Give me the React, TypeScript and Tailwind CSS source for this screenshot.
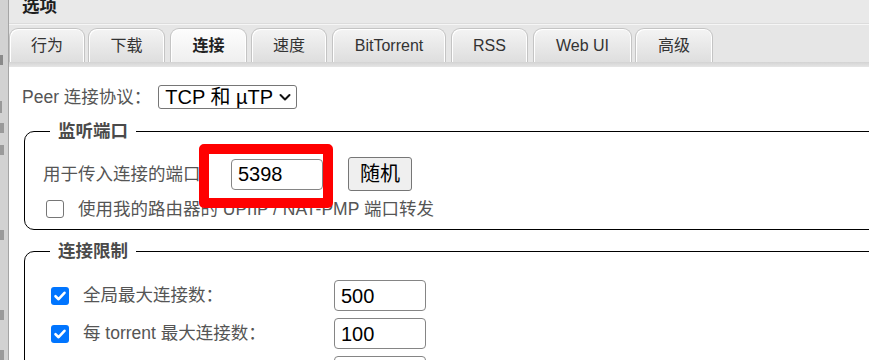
import React from "react";

const FONT = '"Liberation Sans", "Noto Sans CJK SC", sans-serif';

const tabs = [
  { label: "行为", cls: "w-[76px] ml-0", active: false },
  { label: "下载", cls: "w-[77px] ml-[3px]", active: false },
  { label: "连接", cls: "w-[77px] ml-[5px]", active: true },
  { label: "速度", cls: "w-[76px] ml-[4px]", active: false },
  { label: "BitTorrent", cls: "w-[114px] ml-[5px]", active: false },
  { label: "RSS", cls: "w-[77px] ml-[5px]", active: false },
  { label: "Web UI", cls: "w-[99px] ml-[5px]", active: false },
  { label: "高级", cls: "w-[78px] ml-[3px]", active: false },
];

function CheckBox({ checked }: { checked: boolean }) {
  if (checked) {
    return (
      <span className="w-[18px] h-[18px] rounded-[3px] bg-[#0075ff] flex items-center justify-center shrink-0">
        <svg width="14" height="14" viewBox="0 0 14 14">
          <path d="M2.5 7.2 L5.6 10.2 L11.5 3.8" fill="none" stroke="#ffffff" strokeWidth="2.6" strokeLinecap="round" strokeLinejoin="round" />
        </svg>
      </span>
    );
  }
  return <span className="w-[18px] h-[18px] rounded-[3px] border border-[#767676] bg-white shrink-0" />;
}

function NumInput({ value }: { value: string }) {
  return (
    <div className="w-[92px] h-[31px] border border-[#858585] rounded-[4px] bg-white flex items-center pl-[6px] text-[20px] text-black leading-none">
      {value}
    </div>
  );
}

export default function App() {
  return (
    <div className="relative w-[869px] h-[360px] overflow-hidden flex bg-white" style={{ fontFamily: FONT }}>
      {/* background window strip */}
      <div className="w-[9px] shrink-0 bg-[#d2d2d2] border-r border-[#a5a5a5] flex flex-col">
        <div className="h-[55px] shrink-0" />
        <div className="w-[3px] h-[10px] bg-[#8a8a8a] shrink-0" />
        <div className="h-[36px] shrink-0" />
        <div className="w-[2px] h-[12px] bg-[#999] shrink-0" />
        <div className="h-[10px] shrink-0" />
        <div className="w-[4px] h-[10px] bg-[#9a9a9a] shrink-0" />
        <div className="h-[12px] shrink-0" />
        <div className="w-[4px] h-[10px] bg-[#9a9a9a] shrink-0" />
        <div className="h-[75px] shrink-0" />
        <div className="w-[4px] h-[10px] bg-[#9a9a9a] shrink-0" />
        <div className="h-[70px] shrink-0" />
        <div className="w-[4px] h-[10px] bg-[#9a9a9a] shrink-0" />
        <div className="h-[30px] shrink-0" />
        <div className="w-[4px] h-[10px] bg-[#9a9a9a] shrink-0" />
      </div>

      {/* dialog */}
      <div className="flex-1 flex flex-col bg-white min-w-0">
        {/* title bar */}
        <div className="h-[23px] shrink-0 bg-[#e9e9e9] pl-[13px] overflow-hidden">
          <div className="-mt-[4px] h-[20px] leading-[20px] text-[17.5px] font-bold text-[#1e1e1e]">选项</div>
        </div>
        <div className="h-[2px] shrink-0 bg-[#f6f6f6] border-t border-[#dcdcdc]" />
        {/* tab strip */}
        <div className="h-[37px] shrink-0 bg-[#e6e6e6] flex items-end">
          {tabs.map((t) => (
            <div
              key={t.label}
              className={`${t.cls} h-[34px] shrink-0 flex items-center justify-center rounded-t-[9px] border border-b-0 border-[#c4c4c4] shadow-[inset_1px_1px_0_#ffffff,inset_-1px_0_0_#ffffff] text-[16px] ${
                t.active
                  ? "bg-linear-to-b from-[#fdfdfd] to-[#efefef] font-bold text-[#222]"
                  : "bg-linear-to-b from-[#f4f4f4] to-[#dedede] text-[#333]"
              }`}
            >
              {t.label}
            </div>
          ))}
        </div>
        <div className="h-[5px] shrink-0 bg-linear-to-b from-[#d3d3d3] to-[#e6e6e6]" />

        {/* content */}
        <div className="flex flex-col pt-[18px] overflow-hidden min-h-0">
          <div className="h-[24px] shrink-0 flex items-center pl-[13px]">
            <span className="text-[17.5px] text-[#555]">Peer 连接协议：</span>
            <div className="ml-[7px] w-[139px] h-[24px] border border-[#767676] rounded-[3px] bg-white flex items-center pl-[6px] pr-[4px] justify-between text-[20px] text-black leading-none">
              <span>TCP 和 µTP</span>
              <svg width="14" height="14" viewBox="0 0 14 14">
                <path d="M2.5 5 L7 9.5 L11.5 5" fill="none" stroke="#111" strokeWidth="2" strokeLinecap="round" strokeLinejoin="round" />
              </svg>
            </div>
          </div>

          {/* fieldset 1 */}
          <fieldset className="mt-[10px] ml-[15px] w-[900px] shrink-0 border border-black rounded-[10px] p-0 m-0">
            <legend className="ml-[25px] px-[8px] h-[24px] leading-[24px] text-[17.5px] font-bold text-[#4a4a4a]">监听端口</legend>
            <div className="pl-[18px] pt-[14px] pb-[8px]">
              <div className="h-[34px] flex items-center">
                <span className="text-[17.5px] text-[#555]">用于传入连接的端口：</span>
                <div className="ml-[13px]">
                  <NumInput value="5398" />
                </div>
                <div className="ml-[25px] w-[64px] h-[34px] bg-[#efefef] border border-[#767676] rounded-[3px] flex items-center justify-center text-[20px] text-black">
                  随机
                </div>
              </div>
              <div className="mt-[6px] h-[24px] flex items-center pl-[3px]">
                <CheckBox checked={false} />
                <span className="ml-[14px] text-[17.5px] text-[#555]">使用我的路由器的 UPnP / NAT-PMP 端口转发</span>
              </div>
            </div>
          </fieldset>

          {/* fieldset 2 */}
          <fieldset className="mt-[9px] ml-[15px] w-[900px] shrink-0 border border-black rounded-[10px] p-0 m-0">
            <legend className="ml-[25px] px-[8px] h-[24px] leading-[24px] text-[17.5px] font-bold text-[#4a4a4a]">连接限制</legend>
            <div className="pl-[26px] pt-[17px] flex flex-col gap-[7px]">
              <div className="h-[31px] flex items-center">
                <div className="w-[283px] flex items-center">
                  <CheckBox checked={true} />
                  <span className="ml-[14px] text-[17.5px] text-[#555]">全局最大连接数：</span>
                </div>
                <NumInput value="500" />
              </div>
              <div className="h-[31px] flex items-center">
                <div className="w-[283px] flex items-center">
                  <CheckBox checked={true} />
                  <span className="ml-[14px] text-[17.5px] text-[#555]">每 torrent 最大连接数：</span>
                </div>
                <NumInput value="100" />
              </div>
              <div className="h-[31px] flex items-start">
                <div className="w-[283px]" />
                <NumInput value="" />
              </div>
            </div>
          </fieldset>
        </div>
      </div>

      {/* red highlight annotation */}
      <div className="absolute left-[199px] top-[144px] w-[134px] h-[64px] border-[10px] border-[#ff0000] rounded-[5px] pointer-events-none" />
    </div>
  );
}
